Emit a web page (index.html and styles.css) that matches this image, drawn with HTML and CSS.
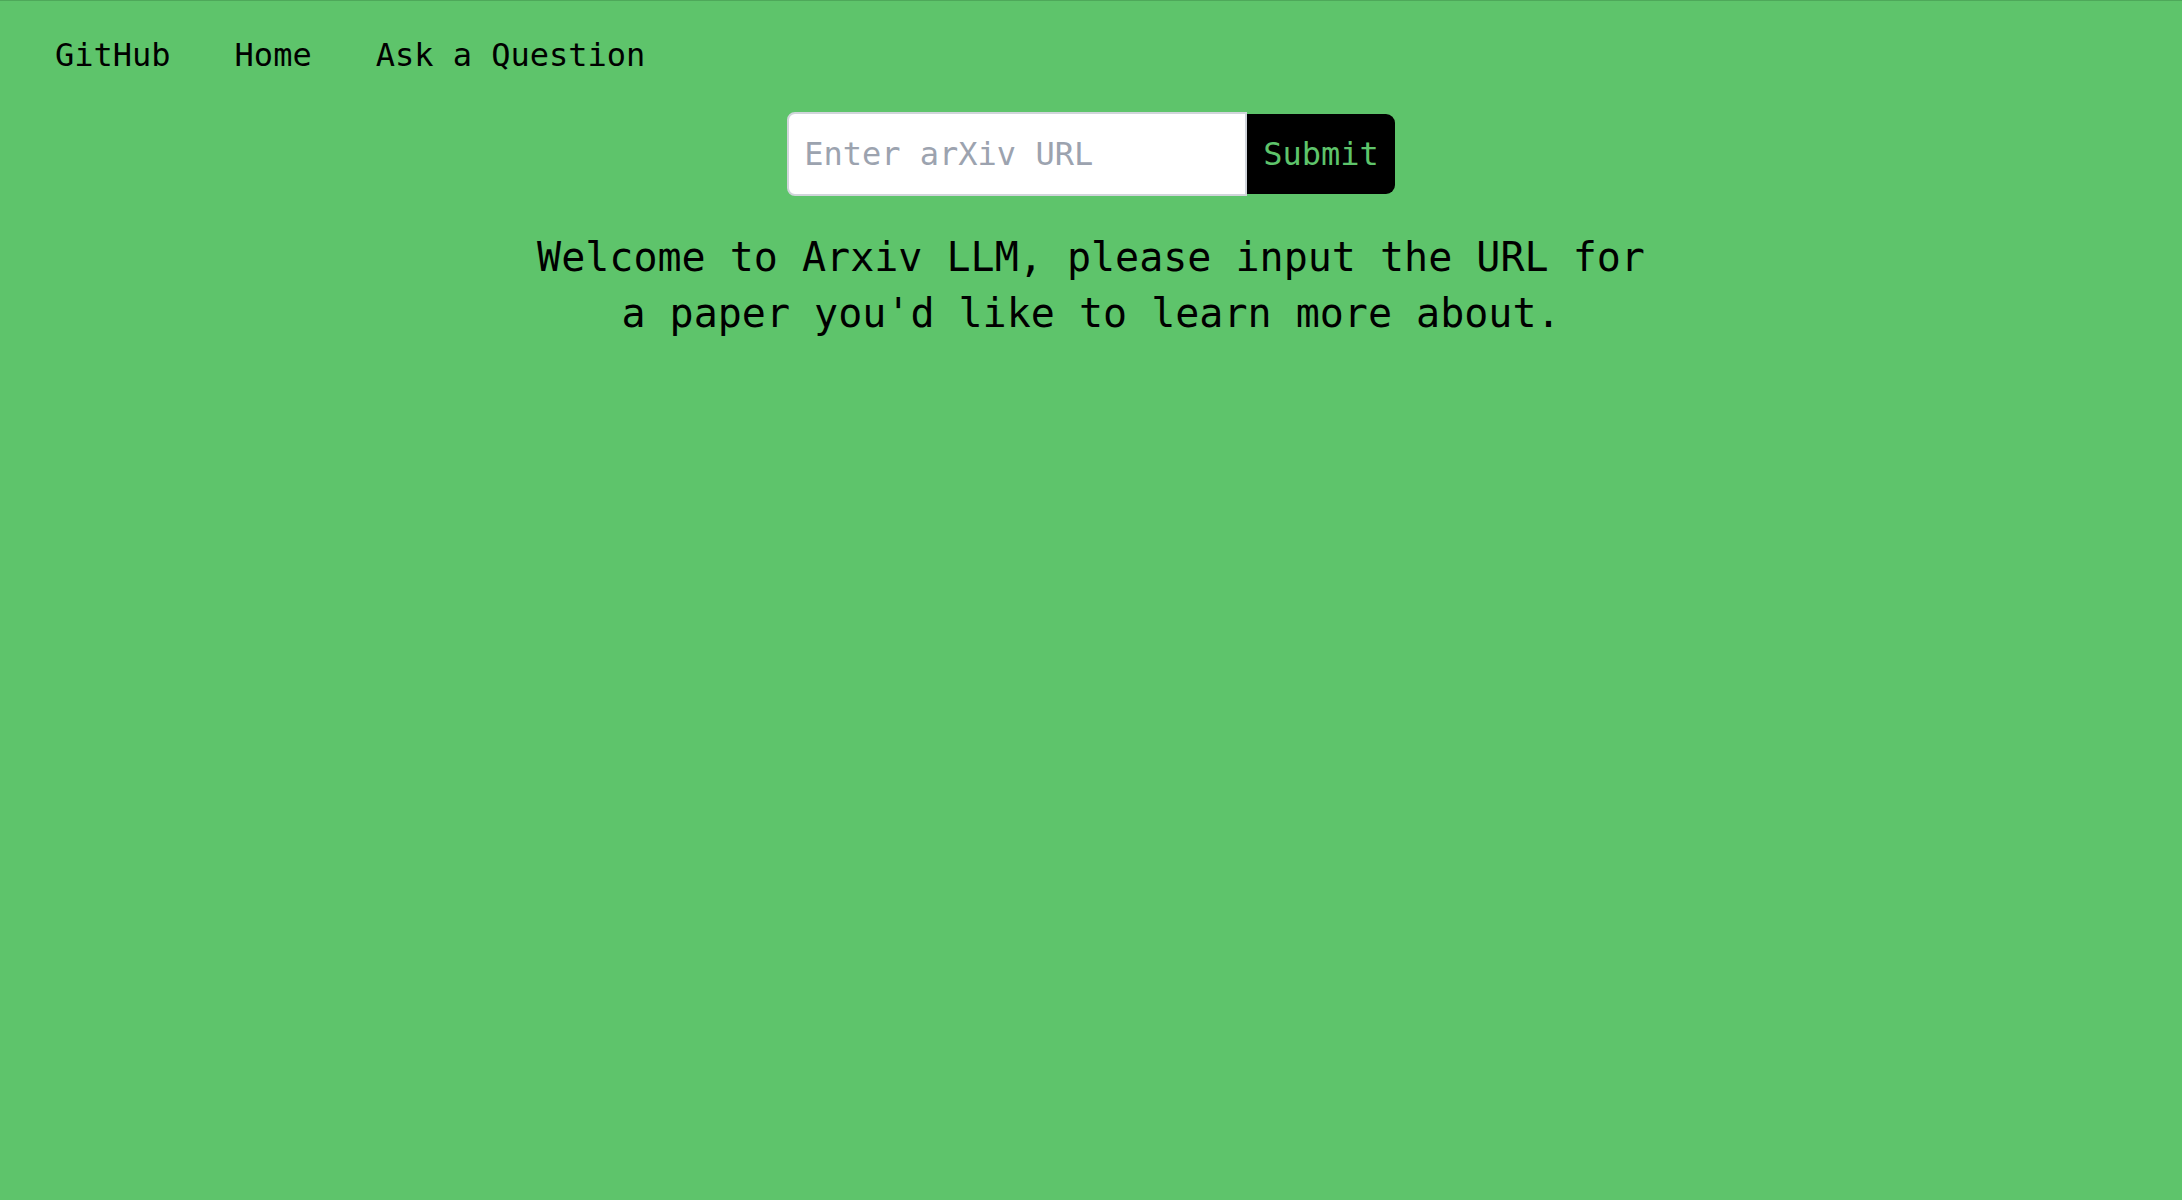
FILE: index.html
```html
<!DOCTYPE html>
<html lang="en">
<head>
<meta charset="utf-8">
<title>Arxiv LLM</title>
<link rel="stylesheet" href="styles.css">
</head>
<body>
  <nav class="nav">
    <a class="nav-link" href="#">GitHub</a>
    <a class="nav-link" href="#">Home</a>
    <a class="nav-link" href="#">Ask a Question</a>
  </nav>
  <main class="main">
    <form class="url-form">
      <input class="url-input" type="text" placeholder="Enter arXiv URL">
      <button class="submit-btn" type="button">Submit</button>
    </form>
    <h1 class="welcome">Welcome to Arxiv LLM, please input the URL for a paper you'd like to learn more about.</h1>
  </main>
</body>
</html>
```

FILE: styles.css
```css
html, body {
  margin: 0;
  padding: 0;
}

body {
  background: #5ec46b;
  border-top: 1px solid #4ea85a;
  min-height: 1199px;
  font-family: "DejaVu Sans Mono", "Liberation Mono", monospace;
  color: #000;
}

.nav {
  display: flex;
  gap: 64px;
  padding: 35px 0 0 55px;
  font-size: 32px;
  line-height: normal;
}

.nav-link {
  color: #000;
  text-decoration: none;
}

.main {
  display: flex;
  flex-direction: column;
  align-items: center;
  padding-top: 38px;
}

.url-form {
  display: flex;
  align-items: center;
  margin: 0;
}

.url-input {
  box-sizing: border-box;
  width: 460px;
  height: 84px;
  border: 2px solid #d1d5db;
  border-radius: 8px 0 0 8px;
  padding: 0 15px;
  background: #fff;
  font-family: "DejaVu Sans Mono", "Liberation Mono", monospace;
  font-size: 32px;
  color: #000;
  outline: none;
}

.url-input::placeholder {
  color: #9ca3af;
}

.submit-btn {
  box-sizing: border-box;
  height: 80px;
  padding: 0 16px;
  border: none;
  border-radius: 0 9px 9px 0;
  background: #000;
  color: #5ec46b;
  font-family: "DejaVu Sans Mono", "Liberation Mono", monospace;
  font-size: 32px;
  cursor: pointer;
}

.welcome {
  max-width: 1120px;
  margin: 33px 0 0;
  font-size: 40px;
  line-height: 56px;
  font-weight: normal;
  text-align: center;
}
```
